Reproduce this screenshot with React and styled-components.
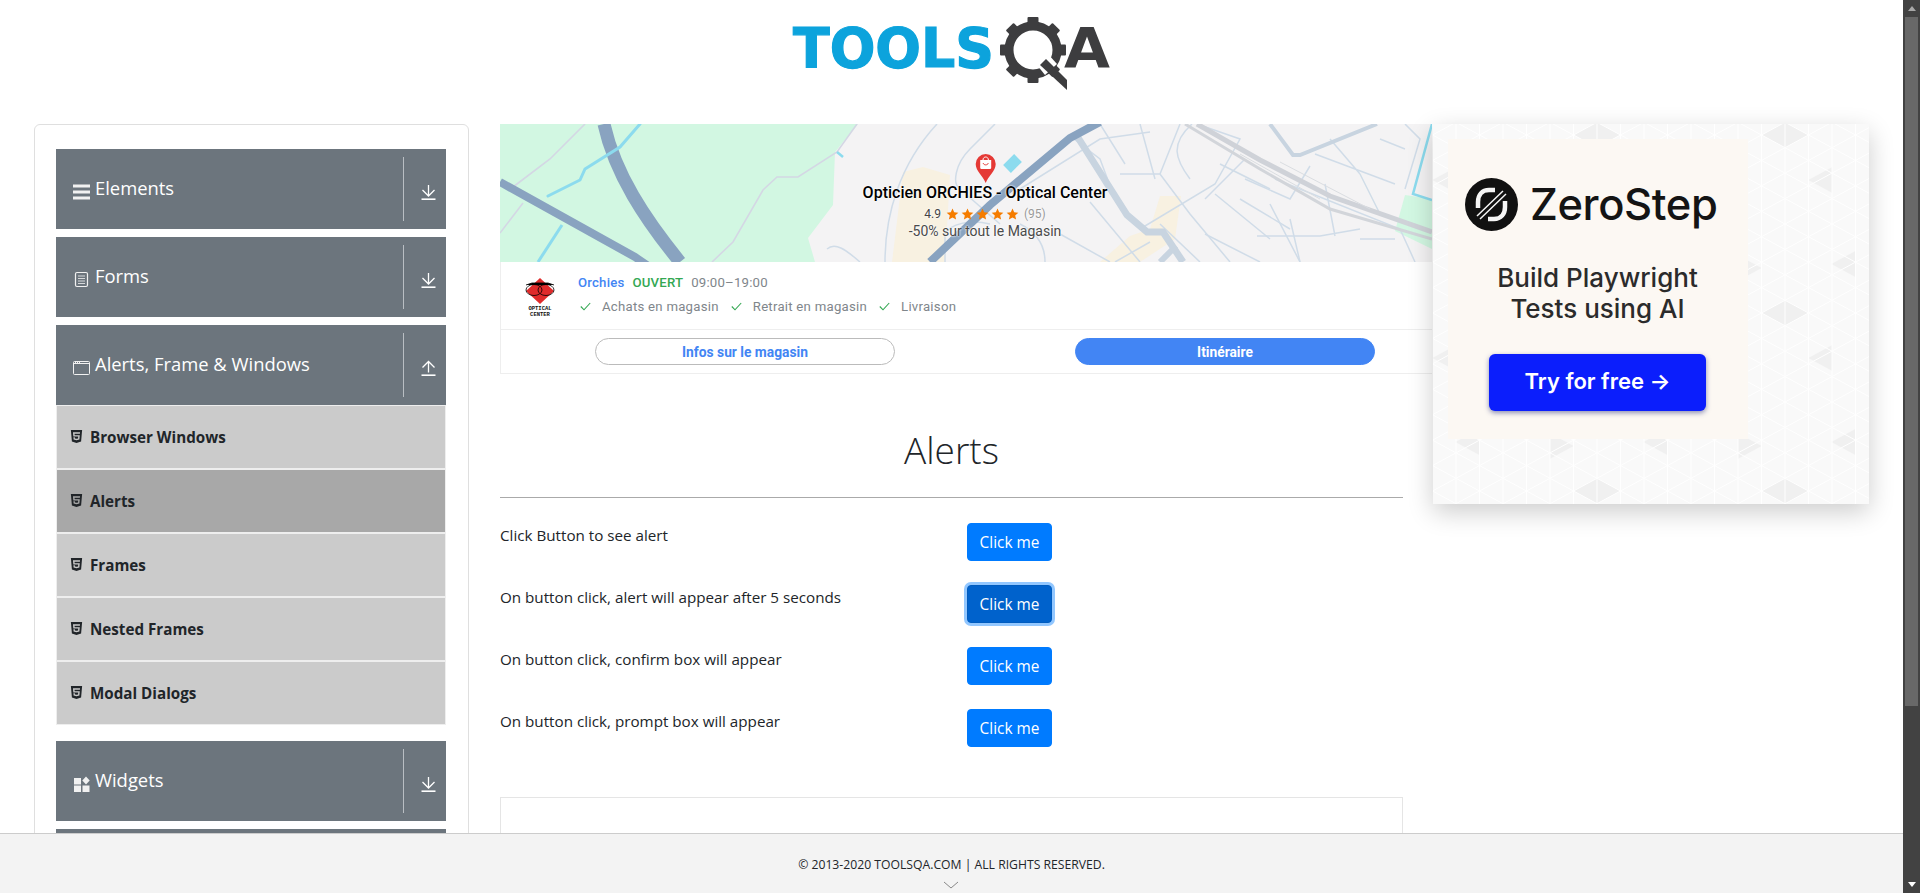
import React from 'react';
import styled, { createGlobalStyle } from 'styled-components';
import { FaHtml5 } from 'react-icons/fa';

const UI_FONT = '"Open Sans", "Noto Sans", sans-serif';
const MAP_FONT = 'Roboto, "Liberation Sans", sans-serif';

const buildTile = () => {
  const w = 23.5;
  const rowH = 178 / 7;
  const rise = rowH * 4;
  let shapes = '';
  const dark = [
    [94, 89, 1],
    [94, 89, -1],
    [47, 44, 1],
    [141, 134, -1],
    [164, 40, -1],
    [24, 140, 1],
  ];
  dark.forEach(([x, y, dir]) => {
    shapes += `<polygon points='${x},${y - 12.7} ${x},${y + 12.7} ${x + dir * 23.5},${y}' fill='#f0f0f0'/>`;
  });
  for (let i = -8; i <= 16; i += 1) {
    const y = i * rowH;
    shapes += `<line x1='0' y1='${y}' x2='188' y2='${y + rise}' stroke='#fff' stroke-width='1'/>`;
    shapes += `<line x1='0' y1='${y}' x2='188' y2='${y - rise}' stroke='#fff' stroke-width='1'/>`;
  }
  for (let x = 0; x <= 188; x += w) {
    shapes += `<line x1='${x}' y1='0' x2='${x}' y2='178' stroke='#fff' stroke-width='1'/>`;
  }
  return `url("data:image/svg+xml,${encodeURIComponent(
    `<svg xmlns='http://www.w3.org/2000/svg' width='188' height='178'><rect width='188' height='178' fill='#f9f9f9'/>${shapes}</svg>`
  )}")`;
};

const GlobalStyle = createGlobalStyle`
  html, body {
    height: 100%;
    overflow: hidden;
  }
  body {
    margin: 0;
    background: #fff;
    color: #212529;
    font-family: ${UI_FONT};
  }
  * {
    box-sizing: border-box;
  }
`;

const Window = styled.div`
  display: flex;
  height: 100vh;
`;

const Viewport = styled.div`
  flex: 1;
  min-width: 0;
  position: relative;
  overflow: hidden;
`;

const ScrollRail = styled.div`
  width: 17px;
  flex: none;
  background: #424242;
  display: grid;
  grid-template-rows: 17px 689px 1fr 17px;
  justify-items: center;
  align-items: center;
`;

const RailArrow = styled.span`
  width: 0;
  height: 0;
  border-left: 4.5px solid transparent;
  border-right: 4.5px solid transparent;
  border-bottom: ${p => (p.$down ? '0' : '5px solid #a8a8a8')};
  border-top: ${p => (p.$down ? '5px solid #fff' : '0')};
`;

const RailThumb = styled.div`
  width: 13px;
  height: 100%;
  background: #686868;
`;

const Header = styled.header`
  height: 124px;
  display: flex;
  justify-content: center;
  padding: 12px 0 0 6px;
`;

const Columns = styled.div`
  display: grid;
  grid-template-columns: 466px 933px 436px;
  padding-left: 34px;
  align-items: start;
`;

const SideCard = styled.aside`
  width: 435px;
  border: 1px solid #dfdfdf;
  border-radius: 6px;
  padding: 24px 22px 24px 21px;
`;

const Group = styled.div`
  margin-bottom: ${p => (p.$open ? 16 : 8)}px;
`;

const GroupHead = styled.div`
  height: 80px;
  background: #6c757d;
  color: #fff;
  display: flex;
  align-items: center;
  padding-left: 17px;
`;

const GroupIcon = styled.svg`
  width: 18px;
  height: 18px;
  margin-top: 5px;
  flex: none;
  color: #f1f1f1;
`;

const GroupTitle = styled.span`
  font-size: 18.4px;
  margin-left: 4px;
  margin-top: -3px;
  flex: 1;
`;

const ArrowCell = styled.div`
  height: 64px;
  width: 43px;
  border-left: 1px solid #b9bec3;
  display: flex;
  align-items: center;
  padding: 5px 0 0 17px;
`;

const MenuItem = styled.div`
  height: 64px;
  border: 1px solid #eee;
  background: ${p => (p.$active ? '#a8a8a8' : '#cbcbcb')};
  display: flex;
  align-items: center;
  gap: 7px;
  padding: 0 0 0 13px;
  font-size: 15.2px;
  font-weight: 700;
  color: #212529;

  svg {
    width: 13px;
    height: 15px;
    margin-top: -2px;
  }
`;

const Main = styled.main`
  min-width: 0;
`;

const AdCard = styled.section`
  width: 932px;
  font-family: ${MAP_FONT};
`;

const MapBox = styled.div`
  position: relative;
  height: 138px;
  background: #f4f3f4;
  overflow: hidden;

  > svg {
    display: block;
  }
`;

const MapLabel = styled.div`
  position: absolute;
  left: 255px;
  width: 460px;
  top: 60px;
  text-align: center;
  text-shadow: 0 0 2px #fff, 0 0 2px #fff;
`;

const StoreName = styled.div`
  font-size: 16px;
  font-weight: 500;
  line-height: 18px;
  color: #000;
`;

const RatingLine = styled.div`
  display: flex;
  justify-content: center;
  align-items: center;
  height: 21px;
  padding-top: 2px;
  font-size: 12px;
  color: #444;
`;

const Stars = styled.span`
  display: inline-flex;
  margin: 0 4px;
  color: #f57c00;

  svg {
    width: 15px;
    height: 14px;
  }
`;

const RatingCount = styled.span`
  color: #9a9a9a;
`;

const Promo = styled.div`
  font-size: 14px;
  line-height: 17px;
  color: #4a4a4a;
`;

const StoreRow = styled.div`
  height: 67px;
  display: flex;
  align-items: center;
  padding-left: 22px;
  border-left: 1px solid #eee;
`;

const StoreLogo = styled.svg`
  width: 34px;
  height: 40px;
  margin-top: 2px;
  flex: none;
`;

const StoreInfo = styled.div`
  margin: -2px 0 0 21px;
  font-size: 13.2px;
`;

const StatusLine = styled.div`
  display: flex;
  gap: 8px;
  line-height: 16px;
`;

const StatusText = styled.span`
  color: ${p => p.$color};
  font-weight: ${p => p.$weight || 500};
  letter-spacing: 0.2px;
`;

const Features = styled.div`
  display: flex;
  gap: 10px;
  margin-top: 8px;
  line-height: 16px;
  color: #80868b;
  letter-spacing: 0.25px;
`;

const Feature = styled.span`
  display: inline-flex;
  align-items: center;
  gap: 11px;
  padding-left: 2px;

  svg {
    width: 11px;
    height: 9px;
  }
`;

const ActionRow = styled.div`
  height: 45px;
  border: 1px solid #eee;
  border-right: 0;
  display: flex;
  align-items: center;
  padding-left: 94px;
  gap: 180px;
`;

const PillButton = styled.div`
  width: 300px;
  height: 27px;
  border-radius: 14px;
  border: 1px solid ${p => (p.$solid ? '#4285f4' : '#bbb')};
  background: ${p => (p.$solid ? '#4285f4' : '#fff')};
  color: ${p => (p.$solid ? '#fff' : '#4285f4')};
  font-size: 13.8px;
  font-weight: 700;
  display: flex;
  align-items: center;
  justify-content: center;
`;

const Content = styled.div`
  width: 903px;
`;

const Title = styled.h1`
  margin: 0;
  padding-top: 51px;
  height: 124px;
  border-bottom: 1px solid #aaa;
  text-align: center;
  font-size: 37px;
  line-height: 50px;
  font-weight: 300;
  color: #212529;
`;

const AlertList = styled.div`
  padding: 25px 0 26px;
`;

const AlertRow = styled.div`
  display: grid;
  grid-template-columns: 467px 85px;
  margin-bottom: 24px;
  height: 38px;
`;

const AlertText = styled.div`
  font-size: 15.2px;
  line-height: 24px;
`;

const ClickButton = styled.button`
  height: 38px;
  width: 85px;
  padding: 0;
  font: 400 15.4px ${UI_FONT};
  color: #fff;
  border-radius: 4px;
  border: 1px solid ${p => (p.$focused ? '#005cbf' : '#007bff')};
  background: ${p => (p.$focused ? '#0062cc' : '#007bff')};
  box-shadow: ${p => (p.$focused ? '0 0 0 3px rgba(38, 143, 255, 0.5)' : 'none')};
`;

const EmptyBox = styled.div`
  height: 250px;
  border: 1px solid #e5e5e5;
`;

const SponsorBox = styled.aside`
  height: 380px;
  padding: 15px;
  background: ${buildTile()} 70px -78px;
  box-shadow: 0 8px 24px rgba(0, 0, 0, 0.2);
  position: relative;
  font-family: Inter, "Liberation Sans", sans-serif;
`;

const SponsorInner = styled.div`
  width: 300px;
  height: 300px;
  background: #fcf8f3;
  text-align: center;
`;

const Brand = styled.div`
  display: flex;
  align-items: center;
  height: 130px;
  padding-left: 17px;
  gap: 12px;
  color: #141414;
  font-size: 43.5px;
  font-weight: 500;
  letter-spacing: -0.4px;
`;

const Pitch = styled.div`
  margin-top: -7px;
  font-size: 26px;
  font-weight: 500;
  line-height: 31px;
  color: #2b2b2b;
  padding-right: 1px;
`;

const TryButton = styled.div`
  width: 217px;
  height: 57px;
  margin: 30px 0 0 41px;
  border-radius: 6px;
  background: #0b1efc;
  color: #fff;
  font-size: 22px;
  font-weight: 600;
  line-height: 55px;
  box-shadow: 0 2px 5px rgba(30, 40, 120, 0.5);
`;

const Footer = styled.footer`
  position: absolute;
  left: 0;
  right: 0;
  bottom: 0;
  height: 60px;
  background: #f3f3f3;
  border-top: 1px solid #ccc;
  text-align: center;
  font-size: 12.2px;
  line-height: 16px;
  padding-top: 23px;
  color: #212529;
  overflow: hidden;
`;

const Chevron = styled.svg`
  position: absolute;
  left: 50%;
  margin-left: -9px;
  top: 47px;
`;

const DownloadArrow = ({ up }) => (
  <svg width="15" height="16" viewBox="0 0 15 16" fill="none" stroke="#fff" strokeWidth="1.3">
    <path d="M0.5 15.2H14.5" strokeWidth="1.6" />
    {up ? <path d="M7.5 12.5V1.5M1.5 7.5L7.5 1.5L13.5 7.5" /> : <path d="M7.5 1V12M1.5 6L7.5 12L13.5 6" />}
  </svg>
);

const BarsIcon = () => (
  <GroupIcon viewBox="0 0 18 18" fill="currentColor">
    <rect x="0" y="1.5" width="17" height="3" />
    <rect x="0" y="7.5" width="17" height="3" />
    <rect x="0" y="13.5" width="17" height="3" />
  </GroupIcon>
);

const FormIcon = () => (
  <GroupIcon viewBox="0 0 18 18" fill="none" stroke="currentColor">
    <rect x="2.5" y="1.5" width="12" height="14" rx="1.5" strokeWidth="1.2" />
    <path d="M5 5H12M5 7.5H12M5 10H12M5 12.5H12" strokeWidth="1" opacity="0.8" />
  </GroupIcon>
);

const WindowIcon = () => (
  <GroupIcon viewBox="0 0 18 18" fill="none" stroke="currentColor">
    <rect x="0.5" y="2.5" width="16" height="13" rx="1" strokeWidth="1" />
    <path d="M0.5 4.5H16.5" strokeWidth="1" />
    <path d="M2 3.5H3M4 3.5H5M6 3.5H7" strokeWidth="1" />
  </GroupIcon>
);

const WidgetIcon = () => (
  <GroupIcon viewBox="0 0 18 18" fill="currentColor">
    <rect x="1" y="3" width="7" height="6.5" />
    <rect x="1" y="10.5" width="7" height="6.5" />
    <rect x="9.5" y="10.5" width="7" height="6.5" />
    <path d="M13 1.5L16.7 5.5L13 9.5L9.3 5.5Z" />
  </GroupIcon>
);

const Star = () => (
  <svg viewBox="0 0 24 24" fill="currentColor">
    <path d="M12 2.5l2.9 6.6 7.1.7-5.4 4.7 1.6 7-6.2-3.7-6.2 3.7 1.6-7L2 9.800l7.100-.7z" />
  </svg>
);

const Check = () => (
  <svg viewBox="0 0 11 9" fill="none" stroke="#34a853" strokeWidth="1.100">
    <path d="M0.800 4.500L4 7.800L10.200 1" />
  </svg>
);

const Logo = () => (
  <svg width="330" height="82" viewBox="0 0 330 82">
    <text
      x="3"
      y="55"
      fontFamily="DejaVu Sans"
      fontWeight="700"
      fontSize="55"
      fill="#0ca3dc"
      stroke="#0ca3dc"
      strokeWidth="1.2"
      textLength="201"
      lengthAdjust="spacingAndGlyphs"
    >
      TOOLS
    </text>
    <g fill="#3d3d3f" transform="translate(243 38)">
      <circle r="24" fill="none" stroke="#3d3d3f" strokeWidth="9" />
      {[0, 45, 90, 135, 180, 225, 270, 315].map(a => (
        <rect key={a} x="-5.500" y="-33" width="11" height="9" rx="1" transform={`rotate(${a})`} />
      ))}
      <path d="M4 15 L15 4 L24 14 L12 25Z" fill="#fff" />
      <path d="M7 15 L13 9 L34 30 V 40Z" />
    </g>
    <text
      x="274"
      y="55"
      fontFamily="DejaVu Sans"
      fontWeight="700"
      fontSize="55"
      fill="#3d3d3f"
      textLength="46"
      lengthAdjust="spacingAndGlyphs"
    >
      A
    </text>
  </svg>
);

const MapArt = () => (
  <svg width="932" height="138" viewBox="0 0 932 138" fill="none">
    <path d="M0 0H358L335 28L333 81L308 114L315 138H0Z" fill="#d2f7e2" />
    <path d="M932 75L905 71L895 107L932 125Z" fill="#d2f7e2" />
    <path d="M392 138L403 48L423 43L450 51L445 138Z" fill="#f8f1e1" />
    <path d="M660 72H681L675 115L640 138H600L630 112L650 105Z" fill="#f8f1e1" />
    <g stroke="#d4d7e4" strokeWidth="1.600">
      <path d="M85 0L50 35L13 63" />
      <path d="M23 79L0 109" />
      <path d="M212 138L233 118L263 66L277 53H298L337 28L357 0" />
    </g>
    <g stroke="#d0dce8" strokeWidth="1.500">
      <path d="M437 0C400 40 385 90 385 138" />
      <path d="M327 125C335 118 345 125 360 138" />
      <path d="M495 0L470 25C455 40 452 60 460 65M460 65L500 100" />
      <path d="M445 138V110C450 100 470 95 490 100" />
      <path d="M512 70L600 15L650 8M615 75L600 35L570 12" />
      <path d="M620 50H660L690 90L730 138M660 50L680 0" />
      <path d="M560 110L610 138M640 105L715 60L740 15L697 0" />
      <path d="M660 100L700 138M590 78L640 138M520 100C540 110 545 125 545 138" />
      <path d="M692 0C670 20 675 35 690 55M745 35L705 75M715 70L770 115M745 55L790 75L810 42" />
      <path d="M770 80L800 138M757 112H820L860 105M835 112L825 60M775 55L900 105L915 138" />
      <path d="M830 15L860 50M815 30L895 60M905 65L920 15L905 0M860 115L895 115" />
      <path d="M600 0L625 40M640 0L655 55M705 110L760 138M615 138L650 118M740 75L790 105" />
      <path d="M790 95L800 138M720 40L770 65M860 50L880 90M880 15L905 25" />
    </g>
    <path d="M685 0L760 45L830 85L932 115" stroke="#d2d5da" strokeWidth="3" />
    <path d="M697 0L760 36L830 72L932 108" stroke="#cfd2d8" strokeWidth="5" />
    <path d="M740 30L820 75M780 38L870 85" stroke="#dadde1" strokeWidth="1" />
    <path d="M577 12L627 91L647 108H663L683 138" stroke="#c8d4e0" strokeWidth="7" />
    <path d="M660 138L676 122" stroke="#c8d4e0" strokeWidth="6" />
    <path d="M770 0L793 31H800L877 0" stroke="#c8d4e0" strokeWidth="4" />
    <path d="M104 0C115 50 145 95 180 138" stroke="#89a3c0" strokeWidth="13" />
    <path d="M0 58L135 133L160 150" stroke="#89a3c0" strokeWidth="8" />
    <path d="M430 138L490 81L570 14L600 -2" stroke="#89a3c0" strokeWidth="8" />
    <g stroke="#8cdbee">
      <path d="M140 0L120 23L85 45L80 56L48 72" strokeWidth="3" strokeLinecap="round" />
      <path d="M62 101L38 138" strokeWidth="3" />
      <path d="M337 28L343 33" strokeWidth="2.500" />
      <path d="M932 0L913 70L932 76" strokeWidth="2.500" />
      <path d="M507 45L518 34" strokeWidth="11" />
    </g>
    <path d="M485.700 59C483 52 475.700 47 475.700 40A10 10 0 1 1 495.700 40C495.700 47 488.400 52 485.700 59Z" fill="#e53935" />
    <path d="M480.200 36H491.200V43.500C491.200 44.500 490.500 45 489.700 45H481.700C480.900 45 480.200 44.500 480.200 43.500Z" fill="#fff" />
    <path d="M483 36C483 32 488.400 32 488.400 36" stroke="#fff" strokeWidth="1" />
    <path d="M483 39C484 41.500 487.400 41.500 488.400 39" stroke="#e53935" strokeWidth="1" />
  </svg>
);

const OpticalLogo = () => (
  <StoreLogo viewBox="0 0 34 40">
    <path d="M17 1L31 14L17 27L3 14Z" fill="#e02b2b" />
    <ellipse cx="11" cy="13" rx="8" ry="5.500" fill="none" stroke="#000" strokeWidth="0.800" />
    <ellipse cx="23" cy="13" rx="8" ry="5.500" fill="none" stroke="#000" strokeWidth="0.800" />
    <path d="M3 8L9 6H25L31 8" stroke="#000" strokeWidth="0.800" />
    <text x="17" y="33" textAnchor="middle" fontFamily="Liberation Mono" fontSize="5.500" fontWeight="700" fill="#111">OPTICAL</text>
    <text x="17" y="39" textAnchor="middle" fontFamily="Liberation Mono" fontSize="5.500" fontWeight="700" fill="#111">CENTER</text>
  </StoreLogo>
);

const ZeroStepMark = () => (
  <svg width="53" height="53" viewBox="0 0 53 53" fill="none">
    <circle cx="26.500" cy="26.500" r="26.500" fill="#111" />
    <path d="M30 12H24C17 12 13 17 13 24V30M23 41H29C36 41 40 36 40 29V23" stroke="#f5f5f5" strokeWidth="4.500" />
    <path d="M12 40L41 12" stroke="#111" strokeWidth="7" />
    <path d="M12 38L38 13M15 41L41 16" stroke="#f5f5f5" strokeWidth="1.500" />
  </svg>
);

const children = ['Browser Windows', 'Alerts', 'Frames', 'Nested Frames', 'Modal Dialogs'];
const alertRows = [
  'Click Button to see alert',
  'On button click, alert will appear after 5 seconds',
  'On button click, confirm box will appear',
  'On button click, prompt box will appear',
];

const App = () => (
  <Window>
    <GlobalStyle />
    <Viewport>
      <Header>
        <Logo />
      </Header>
      <Columns>
        <SideCard>
          <Group>
            <GroupHead>
              <BarsIcon />
              <GroupTitle>Elements</GroupTitle>
              <ArrowCell><DownloadArrow /></ArrowCell>
            </GroupHead>
          </Group>
          <Group>
            <GroupHead>
              <FormIcon />
              <GroupTitle>Forms</GroupTitle>
              <ArrowCell><DownloadArrow /></ArrowCell>
            </GroupHead>
          </Group>
          <Group $open>
            <GroupHead>
              <WindowIcon />
              <GroupTitle>Alerts, Frame &amp; Windows</GroupTitle>
              <ArrowCell><DownloadArrow up /></ArrowCell>
            </GroupHead>
            {children.map(name => (
              <MenuItem key={name} $active={name === 'Alerts'}>
                <FaHtml5 />
                {name}
              </MenuItem>
            ))}
          </Group>
          <Group>
            <GroupHead>
              <WidgetIcon />
              <GroupTitle>Widgets</GroupTitle>
              <ArrowCell><DownloadArrow /></ArrowCell>
            </GroupHead>
          </Group>
          <Group>
            <GroupHead>
              <WidgetIcon />
              <GroupTitle>Interactions</GroupTitle>
              <ArrowCell><DownloadArrow /></ArrowCell>
            </GroupHead>
          </Group>
        </SideCard>

        <Main>
          <AdCard>
            <MapBox>
              <MapArt />
              <MapLabel>
                <StoreName>Opticien ORCHIES - Optical Center</StoreName>
                <RatingLine>
                  4.9
                  <Stars><Star /><Star /><Star /><Star /><Star /></Stars>
                  <RatingCount>(95)</RatingCount>
                </RatingLine>
                <Promo>-50% sur tout le Magasin</Promo>
              </MapLabel>
            </MapBox>
            <StoreRow>
              <OpticalLogo />
              <StoreInfo>
                <StatusLine>
                  <StatusText $color="#4285f4">Orchies</StatusText>
                  <StatusText $color="#34a853">OUVERT</StatusText>
                  <StatusText $color="#80868b" $weight={400}>09:00–19:00</StatusText>
                </StatusLine>
                <Features>
                  <Feature><Check />Achats en magasin</Feature>
                  <Feature><Check />Retrait en magasin</Feature>
                  <Feature><Check />Livraison</Feature>
                </Features>
              </StoreInfo>
            </StoreRow>
            <ActionRow>
              <PillButton>Infos sur le magasin</PillButton>
              <PillButton $solid>Itinéraire</PillButton>
            </ActionRow>
          </AdCard>
          <Content>
            <Title>Alerts</Title>
            <AlertList>
              {alertRows.map((text, i) => (
                <AlertRow key={text}>
                  <AlertText>{text}</AlertText>
                  <ClickButton $focused={i === 1}>Click me</ClickButton>
                </AlertRow>
              ))}
            </AlertList>
            <EmptyBox />
          </Content>
        </Main>

        <SponsorBox>
          <SponsorInner>
            <Brand>
              <ZeroStepMark />
              ZeroStep
            </Brand>
            <Pitch>Build Playwright<br />Tests using AI</Pitch>
            <TryButton>Try for free →</TryButton>
          </SponsorInner>
        </SponsorBox>
      </Columns>
      <Footer>
        © 2013-2020 TOOLSQA.COM | ALL RIGHTS RESERVED.
        <Chevron width="16" height="9" viewBox="0 0 16 9" fill="none" stroke="#888">
          <path d="M1 1L8 7L15 1" />
        </Chevron>
      </Footer>
    </Viewport>
    <ScrollRail>
      <RailArrow />
      <RailThumb />
      <span />
      <RailArrow $down />
    </ScrollRail>
  </Window>
);

export default App;
